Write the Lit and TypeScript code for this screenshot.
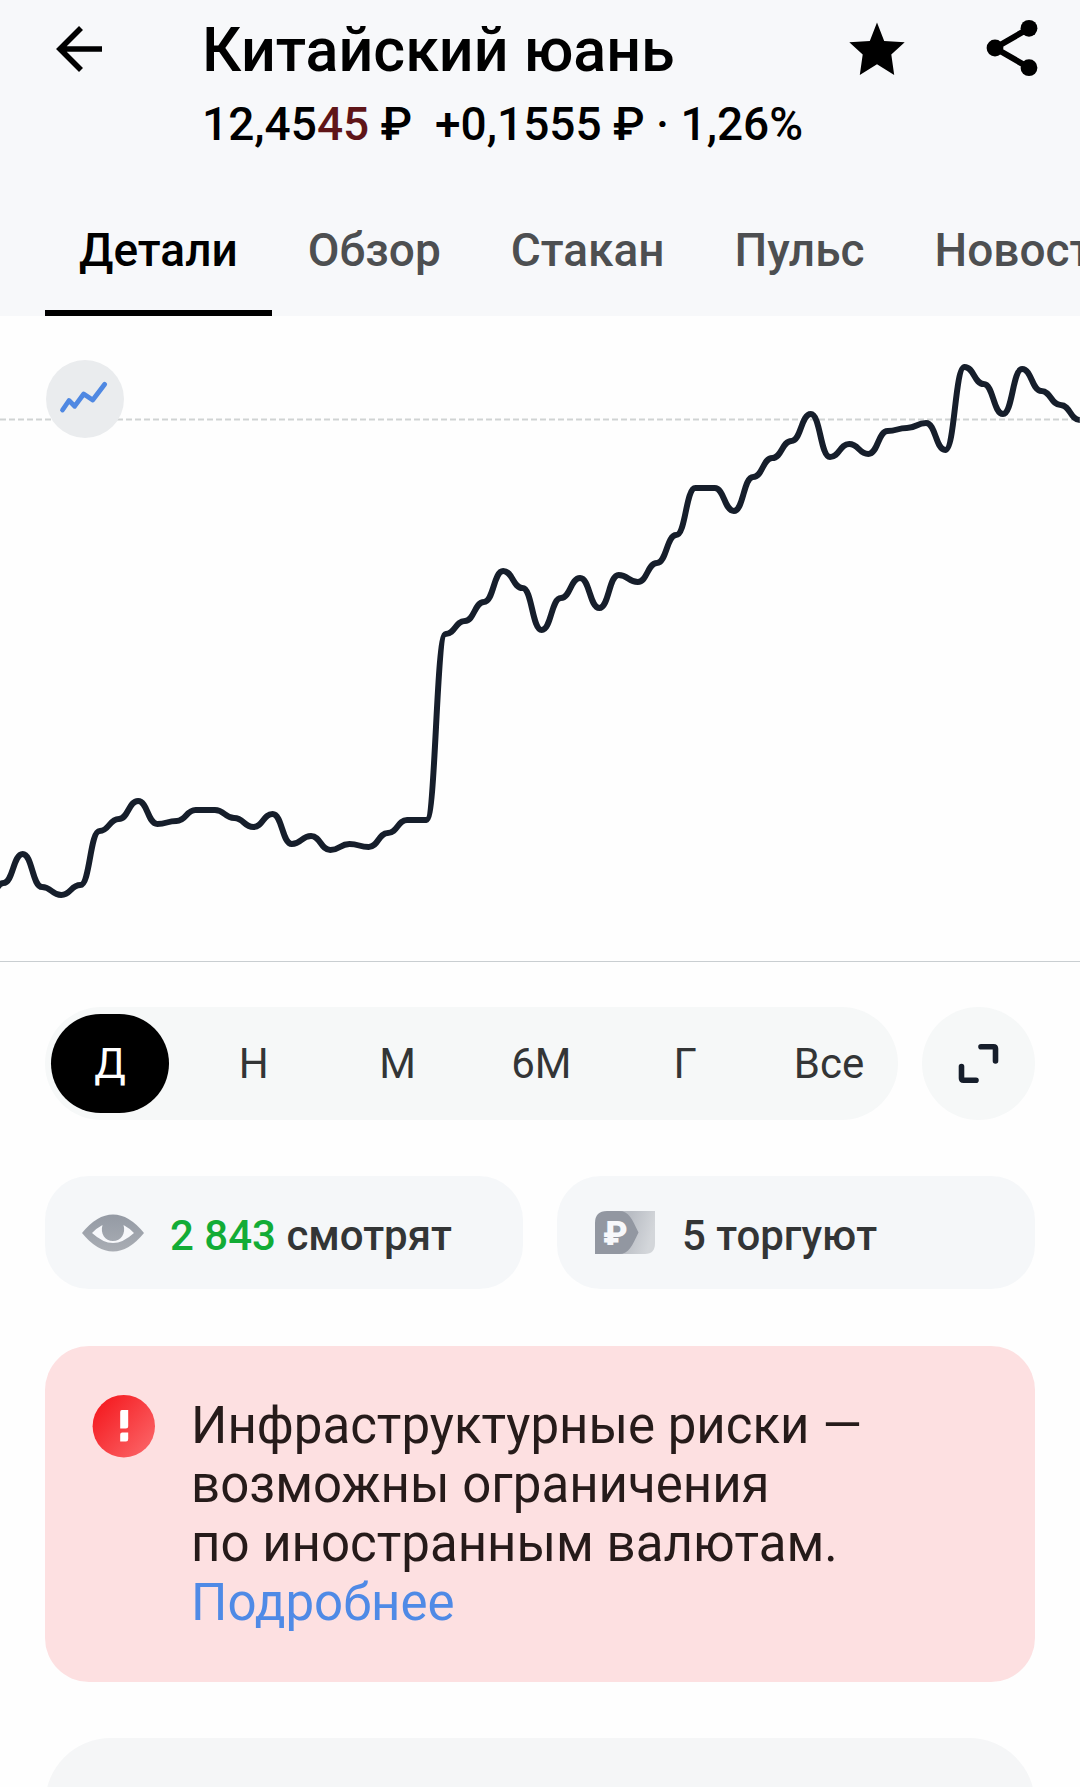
import { LitElement, html, css, svg } from "lit";
import { customElement, state } from "lit/decorators.js";
import { classMap } from "lit/directives/class-map.js";

const TABS = ["Детали", "Обзор", "Стакан", "Пульс", "Новости"];
const PERIODS = ["Д", "Н", "М", "6М", "Г", "Все"];

// Vertical positions of the quotes inside the 1080 x 645 chart area.
const QUOTES = [
  590, 567, 538, 571, 579, 569, 515, 503, 485, 508, 505, 494, 494, 502, 511, 498, 528, 520, 534, 528,
  531, 517, 504, 504, 318, 305, 286, 255, 272, 314, 282, 262, 292, 259, 266, 247, 219, 172, 172, 195,
  161, 142, 125, 98, 141, 128, 138, 115, 112, 107, 134, 51, 68, 98, 53, 75, 89, 104,
];
const STEP = 19.22;
const START = -15.7;
const EASE = 0.5;

function quotePath(): string {
  let d = `M${START} ${QUOTES[0]}`;
  for (let i = 1; i < QUOTES.length; i++) {
    const x0 = START + (i - 1) * STEP;
    const x1 = START + i * STEP;
    const c0 = (x0 + STEP * EASE).toFixed(1);
    const c1 = (x1 - STEP * EASE).toFixed(1);
    d += ` C${c0} ${QUOTES[i - 1]} ${c1} ${QUOTES[i]} ${x1.toFixed(1)} ${QUOTES[i]}`;
  }
  return d;
}

@customElement("quote-chart")
export class QuoteChart extends LitElement {
  static styles = css`
    :host {
      display: block;
      position: relative;
      border-bottom: 1px solid #c9ced1;
    }
    .plot {
      display: block;
      width: 100%;
      height: auto;
    }
    .kind {
      position: absolute;
      top: 44px;
      left: 46px;
      width: 78px;
      height: 78px;
      padding: 0;
      border: 0;
      border-radius: 50%;
      background: #eaecee;
      cursor: pointer;
    }
    .kind svg {
      display: block;
    }
  `;

  render() {
    return html`
      <svg class="plot" viewBox="0 0 1080 645" role="img" aria-label="График курса">
        <line x1="0" y1="103.5" x2="1080" y2="103.5" stroke="#d0d3d3" stroke-width="2" stroke-dasharray="6 3" />
        ${svg`<path d=${quotePath()} fill="none" stroke="#161e2b" stroke-width="6" stroke-linejoin="round" />`}
      </svg>
      <button class="kind" aria-label="Вид графика">
        <svg width="78" height="78" viewBox="0 0 78 78" aria-hidden="true">
          <path
            d="M16.500 50L23 40.500L28.700 46.200L37.700 34L46.700 40L58.700 24.300"
            fill="none"
            stroke="#4f88e2"
            stroke-width="4.800"
            stroke-linecap="round"
            stroke-linejoin="round"
          />
        </svg>
      </button>
    `;
  }
}

@customElement("app-root")
export class AppRoot extends LitElement {
  @state() private tab = 0;
  @state() private period = 0;

  static styles = css`
    :host {
      display: flex;
      flex-direction: column;
      min-height: 100vh;
      background: #fefefe;
      color: #000;
      font-family: Roboto, "Liberation Sans", sans-serif;
    }
    button {
      font: inherit;
      color: inherit;
      border: 0;
      padding: 0;
      background: none;
      cursor: pointer;
    }
    svg {
      display: block;
    }
    .top {
      background: #f7f8fa;
      overflow: hidden;
    }
    .bar {
      display: flex;
      align-items: flex-start;
      padding: 12px 33px 0 45px;
    }
    .icon {
      flex: none;
      width: 72px;
      height: 72px;
    }
    .heading {
      flex: 1;
      margin-left: 85px;
      min-width: 0;
      white-space: nowrap;
    }
    .title {
      margin: 0;
      font-size: 61px;
      line-height: 76px;
      font-weight: 500;
    }
    .price {
      margin: 0;
      font-size: 46px;
      line-height: 72px;
      font-weight: 500;
      white-space: pre;
    }
    .drop {
      color: #5f1518;
    }
    .actions {
      display: flex;
      gap: 64px;
    }
    .tabs {
      display: flex;
      gap: 2px;
      margin-top: 36px;
      padding-left: 45px;
    }
    .tab {
      flex: none;
      height: 120px;
      padding: 0 34px 6px;
      border-bottom: 6px solid transparent;
      font-size: 46px;
      line-height: 54px;
      font-weight: 500;
      color: #4d4f51;
    }
    .tab.on {
      color: #000;
      border-bottom-color: #000;
    }
    .ranges {
      display: flex;
      gap: 24px;
      margin: 45px 45px 0;
    }
    .periods {
      flex: 1;
      display: flex;
      justify-content: space-between;
      padding: 7px 10px 7px 6px;
      border-radius: 57px;
      background: #f6f8f8;
    }
    .period {
      width: 118px;
      height: 99px;
      border-radius: 50px;
      font-size: 42px;
      line-height: 50px;
      color: #333536;
    }
    .period.on {
      background: #000;
      color: #fff;
    }
    .expand {
      flex: none;
      width: 113px;
      height: 113px;
      border-radius: 50%;
      background: #f6f8f8;
    }
    .chips {
      display: grid;
      grid-template-columns: 1fr 1fr;
      gap: 34px;
      margin: 56px 45px 0;
    }
    .chip {
      display: flex;
      align-items: center;
      gap: 26px;
      height: 113px;
      padding: 0 37px;
      border-radius: 44px;
      background: #f5f7f9;
      font-size: 42px;
      line-height: 50px;
      font-weight: 500;
      color: #333536;
      white-space: nowrap;
    }
    .chip svg {
      flex: none;
    }
    .label {
      padding-top: 6px;
    }
    .count {
      color: #12ac36;
    }
    .alert {
      display: flex;
      gap: 36px;
      margin: 57px 45px 0;
      padding: 49px 47px 50px;
      border-radius: 44px;
      background: #fde0e1;
      color: #261b1a;
    }
    .alert svg {
      flex: none;
    }
    .message {
      margin: 0;
      padding-top: 1px;
      font-size: 51px;
      line-height: 59px;
    }
    .more {
      color: #4f8ae6;
      text-decoration: none;
    }
    .next {
      flex: 1 0 50px;
      height: 50px;
      margin: 56px 45px 0;
      overflow: hidden;
    }
    .card {
      height: 180px;
      border-radius: 66px;
      background: #f5f6f7;
    }
  `;

  render() {
    return html`
      <header class="top">
        <div class="bar">
          <button class="icon" aria-label="Назад">
            <svg width="72" height="72" viewBox="0 0 72 72" aria-hidden="true">
              <path d="M57 37H15M36 16L15 37L36 58" fill="none" stroke="#000" stroke-width="5.600" />
            </svg>
          </button>
          <div class="heading">
            <h1 class="title">Китайский юань</h1>
            <p class="price">12,45<span class="drop">45</span> ₽  +0,1555 ₽ · 1,26%</p>
          </div>
          <div class="actions">
            <button class="icon" aria-label="В избранном">
              <svg width="72" height="72" viewBox="0 0 72 72" aria-hidden="true">
                <path d="M38 10.500L45.200 29L65.700 30.300L52.300 42.500L55.200 63L38 52.300L20.800 63L23.700 42.500L10.300 30.300L30.800 29Z" fill="#000" />
              </svg>
            </button>
            <button class="icon" aria-label="Поделиться">
              <svg width="72" height="72" viewBox="0 0 72 72" aria-hidden="true">
                <path d="M54 16.300L20 36L54 55.700" fill="none" stroke="#000" stroke-width="6" />
                <circle cx="54" cy="16.300" r="8.400" />
                <circle cx="20" cy="36" r="8.400" />
                <circle cx="54" cy="55.700" r="8.400" />
              </svg>
            </button>
          </div>
        </div>
        <nav class="tabs">
          ${TABS.map(
            (name, i) => html`<button
              class=${classMap({ tab: true, on: i === this.tab })}
              @click=${() => (this.tab = i)}
            >${name}</button>`
          )}
        </nav>
      </header>

      <quote-chart></quote-chart>

      <div class="ranges">
        <div class="periods">
          ${PERIODS.map(
            (name, i) => html`<button
              class=${classMap({ period: true, on: i === this.period })}
              @click=${() => (this.period = i)}
            >${name}</button>`
          )}
        </div>
        <button class="expand" aria-label="На весь экран">
          <svg width="113" height="113" viewBox="0 0 113 113" aria-hidden="true">
            <path
              d="M59 39.700H71.500Q73.500 39.700 73.500 41.700V54M39.500 59.500V71.300Q39.500 73.300 41.500 73.300H54"
              fill="none"
              stroke="#161e2b"
              stroke-width="5.600"
              stroke-linecap="round"
            />
          </svg>
        </button>
      </div>

      <div class="chips">
        <div class="chip">
          <svg width="62" height="43" viewBox="0 0 62 43" aria-hidden="true">
            <defs>
              <linearGradient id="eye" x1="0" y1="0" x2="0" y2="1">
                <stop offset="0" stop-color="#949aa4" />
                <stop offset="1" stop-color="#a9adb4" />
              </linearGradient>
            </defs>
            <path d="M0 22Q15 3.500 31 3.500Q47 3.500 62 22Q47 40.500 31 40.500Q15 40.500 0 22Z" fill="url(#eye)" />
            <path d="M10 22Q14 17.500 20.500 14C18 22.500 23 30 31 30C39 30 44 22.500 41.500 14Q48 17.500 52 22Q41 32 31 32Q21 32 10 22Z" fill="#f7f8fb" />
          </svg>
          <span class="label"><span class="count">2 843</span> смотрят</span>
        </div>
        <div class="chip">
          <svg width="62" height="43" viewBox="0 0 62 43" aria-hidden="true">
            <defs>
              <linearGradient id="note" x1="0" y1="0" x2="1" y2="0.300">
                <stop offset="0.400" stop-color="#b9bdc4" />
                <stop offset="1" stop-color="#d3d6da" />
              </linearGradient>
            </defs>
            <path d="M20 0H61V32Q61 43 51 43H20Z" fill="url(#note)" />
            <path d="M1 43V12Q1 0 13 0H25C35 0 38 8 44.500 21.500C38 35 35 43 25 43Z" fill="#9297a1" />
            <text x="9" y="34" font-size="34" font-weight="900" fill="#f7f8fb">₽</text>
          </svg>
          <span class="label">5 торгуют</span>
        </div>
      </div>

      <section class="alert">
        <svg width="63" height="63" viewBox="0 0 63 63" aria-hidden="true">
          <defs>
            <linearGradient id="risk" x1="0.100" y1="0.200" x2="0.900" y2="0.900">
              <stop offset="0" stop-color="#f51f24" />
              <stop offset="1" stop-color="#fb6265" />
            </linearGradient>
          </defs>
          <circle cx="31.800" cy="31.200" r="31.200" fill="url(#risk)" />
          <path d="M29.800 15H36.200V31Q36.200 33.500 33.700 33.500H28.200V17Q28.200 15 29.800 15ZM30.200 37.500H36.200V44Q36.200 46.500 34 46.500H28.200V39.500Q28.200 37.500 30.200 37.500Z" fill="#fff" />
        </svg>
        <p class="message">
          Инфраструктурные риски —<br />возможны ограничения<br />по иностранным валютам.<br /><a class="more" href="#risks">Подробнее</a>
        </p>
      </section>

      <section class="next"><div class="card"></div></section>
    `;
  }
}
